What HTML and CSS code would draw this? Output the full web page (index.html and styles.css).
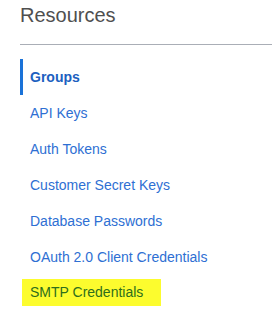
FILE: index.html
```html
<!DOCTYPE html>
<html>
<head>
  <title>Resources</title>
  <link rel="stylesheet" href="styles.css">
</head>
<body>

  <div class="header">
    <h2>Resources</h2>
  </div>

  <ul class="nav">
    <li class="active"><a href="#">Groups</a></li>
    <li><a href="#">API Keys</a></li>
    <li><a href="#">Auth Tokens</a></li>
    <li><a href="#">Customer Secret Keys</a></li>
    <li><a href="#">Database Passwords</a></li>
    <li><a href="#">OAuth 2.0 Client Credentials</a></li>
    <li><a href="#" class="marked">SMTP Credentials</a></li>
  </ul>

</body>
</html>
```

FILE: styles.css
```css
html, body {
  overflow: hidden;
}
body {
  font-family: "Liberation Sans", Arial, sans-serif;
  margin: 0;
  background: #fff;
}
.header {
  margin-left: 20px;
  padding-top: 4px;
  padding-bottom: 17px;
  border-bottom: 1px solid #aaaeb6;
}
.header h2 {
  margin: 0;
  font-size: 20px;
  line-height: 23px;
  font-weight: normal;
  color: #4f4f4f;
}
.nav {
  list-style: none;
  margin: 14px 0 0 20px;
  padding: 0;
}
.nav li {
  height: 36px;
  padding-left: 10px;
}
.nav a {
  display: block;
  font-size: 14px;
  line-height: 36px;
  color: #2e6fd3;
  text-decoration: none;
}
.nav li.active {
  border-left: 3px solid #1a72d8;
  padding-left: 7px;
}
.nav li.active a {
  font-weight: bold;
  color: #1c60c0;
}
.nav a.marked {
  display: inline-block;
  line-height: 27px;
  margin: 4px 0 5px -8px;
  padding: 0 18px 0 8px;
  background: #fcfc2e;
  color: #2e6e1c;
}
```
